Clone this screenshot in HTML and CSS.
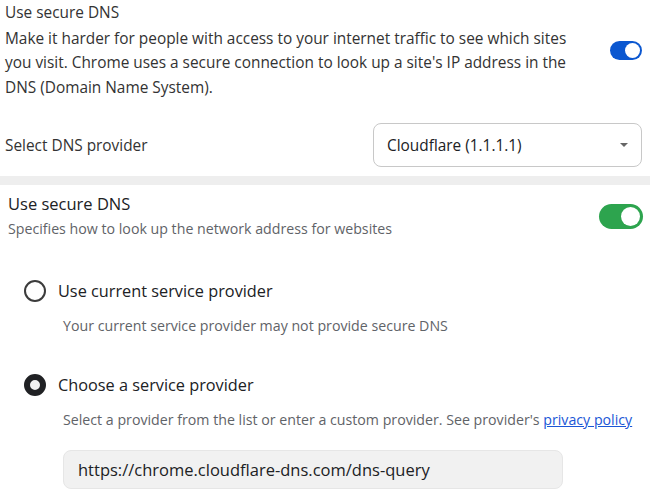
FILE: index.html
```html
<!DOCTYPE html>
<html lang="en">
<head>
    <meta charset="UTF-8">
    <title>Secure DNS</title>
    <link rel="stylesheet" href="styles.css">
</head>
<body>
    <section class="old-settings">
        <div class="setting-row">
            <div class="setting-text">
                <div class="setting-title">Use secure DNS</div>
                <p>Make it harder for people with access to your internet traffic to see which sites you visit. Chrome uses a secure connection to look up a site's IP address in the DNS (Domain Name System).</p>
            </div>
            <div class="toggle blue"><span class="knob"></span></div>
        </div>
        <div class="select-row">
            <span>Select DNS provider</span>
            <div class="select-box">
                <span>Cloudflare (1.1.1.1)</span>
                <span class="arrow"></span>
            </div>
        </div>
    </section>

    <div class="divider"></div>

    <section class="new-settings">
        <div class="header-row">
            <div>
                <div class="title">Use secure DNS</div>
                <div class="subtitle">Specifies how to look up the network address for websites</div>
            </div>
            <div class="toggle green"><span class="knob"></span></div>
        </div>

        <div class="option">
            <div class="option-label">
                <span class="radio"></span>
                <span>Use current service provider</span>
            </div>
            <div class="option-desc">Your current service provider may not provide secure DNS</div>
        </div>

        <div class="option">
            <div class="option-label">
                <span class="radio checked"></span>
                <span>Choose a service provider</span>
            </div>
            <div class="option-desc">Select a provider from the list or enter a custom provider. See provider's <a href="#">privacy policy</a></div>
            <div class="url-input">https://chrome.cloudflare-dns.com/dns-query</div>
        </div>
    </section>
</body>
</html>
```

FILE: styles.css
```css
* {
    margin: 0;
    padding: 0;
    box-sizing: border-box;
}

body {
    background: white;
    color: #202124;
    font-family: 'Open Sans', sans-serif;
    width: 650px;
    overflow: hidden;
}

.old-settings {
    padding: 1px 8px 0 5px;
    font-size: 15.4px;
    color: #333;
}

.setting-row {
    display: flex;
    align-items: center;
    justify-content: space-between;
}

.setting-text {
    width: 575px;
    line-height: 24.5px;
}

.setting-text p {
    margin-top: 1px;
}

.toggle {
    position: relative;
    border-radius: 20px;
}

.toggle.blue {
    width: 32px;
    height: 19px;
    background: #0b57d0;
}

.toggle.blue .knob {
    position: absolute;
    right: 2px;
    top: 2px;
    width: 15px;
    height: 15px;
    background: white;
    border-radius: 50%;
}

.toggle.green {
    width: 44px;
    height: 25px;
    background: #2da44e;
}

.toggle.green .knob {
    position: absolute;
    right: 3px;
    top: 3px;
    width: 19px;
    height: 19px;
    background: white;
    border-radius: 50%;
}

.select-row {
    display: flex;
    align-items: center;
    justify-content: space-between;
    margin-top: 23px;
    padding-bottom: 9px;
}

.select-box {
    width: 269px;
    height: 44px;
    border: 1px solid #c8c8c8;
    border-radius: 8px;
    display: flex;
    align-items: center;
    justify-content: space-between;
    padding: 0 13px;
    color: #202124;
}

.arrow {
    width: 0;
    height: 0;
    border-left: 4px solid transparent;
    border-right: 4px solid transparent;
    border-top: 4px solid #666;
}

.divider {
    height: 9px;
    background: #eeeeee;
}

.new-settings {
    padding: 0 7px 0 8px;
}

.header-row {
    display: flex;
    justify-content: space-between;
    align-items: center;
    margin-top: 7px;
}

.title {
    font-size: 16.5px;
    line-height: 24px;
}

.subtitle {
    font-size: 14.2px;
    color: #5f6368;
    line-height: 25px;
}

.option {
    padding-left: 16px;
}

.option-label {
    display: flex;
    align-items: center;
    gap: 12px;
    font-size: 16.3px;
    margin-top: 39px;
}

.radio {
    width: 22px;
    height: 22px;
    border: 2px solid #3c3c3c;
    border-radius: 50%;
}

.radio.checked {
    border: 6px solid #202124;
    background: #f1f1f1;
}

.option-desc {
    font-size: 14.2px;
    color: #5f6368;
    margin: 14px 0 0 39px;
}

.option-desc a {
    color: #1a56d6;
}

.url-input {
    margin: 21px 0 0 39px;
    width: 500px;
    height: 39px;
    background: #f1f1f1;
    border: 1px solid #e6e6e6;
    border-radius: 8px;
    font-size: 16.5px;
    padding: 0 14px;
    display: flex;
    align-items: center;
}
```
